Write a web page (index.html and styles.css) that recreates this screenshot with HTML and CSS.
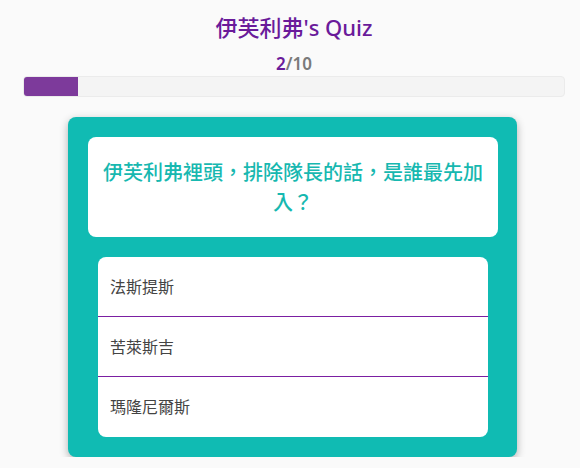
FILE: index.html
```html
<!DOCTYPE html>
<html lang="zh-Hant">
<head>
    <meta charset="UTF-8">
    <meta name="viewport" content="width=device-width, initial-scale=1.0">
    <title>伊芙利弗's Quiz</title>
    <link rel="stylesheet" href="styles.css">
</head>
<body>
    <div id="quiz-container">
        <h1 class="quiz-title">伊芙利弗's Quiz</h1>
        <div class="quiz-count"><span class="current">2</span>/10</div>
        <div class="progress">
            <div class="progress-fill" style="width: 10%"></div>
        </div>
        <div class="question-card">
            <div class="question-text">伊芙利弗裡頭，排除隊長的話，是誰最先加入？</div>
            <ul class="answers">
                <li class="answer">法斯提斯</li>
                <li class="answer">苦萊斯吉</li>
                <li class="answer">瑪隆尼爾斯</li>
            </ul>
        </div>
    </div>
</body>
</html>
```

FILE: styles.css
```css
body {
    font-family: 'Noto Sans', 'Noto Sans CJK TC', sans-serif;
    margin: 0;
    padding: 0;
    background-color: #fafafa;
    color: #444;
}
#quiz-container {
    width: 542px;
    margin-left: 23px;
    padding-top: 11px;
    display: flex;
    flex-direction: column;
}
.quiz-title {
    margin: 0;
    text-align: center;
    font-size: 22px;
    font-weight: 500;
    line-height: 32px;
    color: #6a1b9a;
}
.quiz-count {
    margin-top: 10px;
    text-align: center;
    font-size: 17px;
    font-weight: 600;
    line-height: 22px;
    color: #7a7a7a;
}
.quiz-count .current {
    color: #6a1b9a;
}
.progress {
    margin-top: 1px;
    height: 19px;
    background: #f4f4f4;
    border: 1px solid #ebebeb;
    border-radius: 4px;
    overflow: hidden;
}
.progress-fill {
    height: 100%;
    background: #7d3a9b;
}
/* Question card */
.question-card {
    margin-top: 20px;
    margin-left: 45px;
    width: 449px;
    box-sizing: border-box;
    padding: 20px 19px 20px 20px;
    background: #10bbb3;
    border-radius: 8px;
    box-shadow: 0 3px 8px rgba(0, 0, 0, 0.3);
}
.question-text {
    background: #fff;
    border-radius: 8px;
    padding: 20px 10px;
    text-align: center;
    font-family: 'Noto Sans CJK TC', sans-serif;
    font-size: 20px;
    font-weight: 500;
    line-height: 30px;
    color: #17b8b0;
}
.answers {
    list-style: none;
    margin: 20px 10px 0;
    padding: 0;
    background: #fff;
    border-radius: 8px;
    overflow: hidden;
}
.answer {
    height: 59px;
    line-height: 59px;
    padding-left: 12px;
    font-family: 'Noto Sans CJK TC', sans-serif;
    font-size: 16px;
    color: #444;
}
.answer + .answer {
    border-top: 1px solid #7b1fa2;
}
.answer:last-child {
    height: 60px;
}
```
